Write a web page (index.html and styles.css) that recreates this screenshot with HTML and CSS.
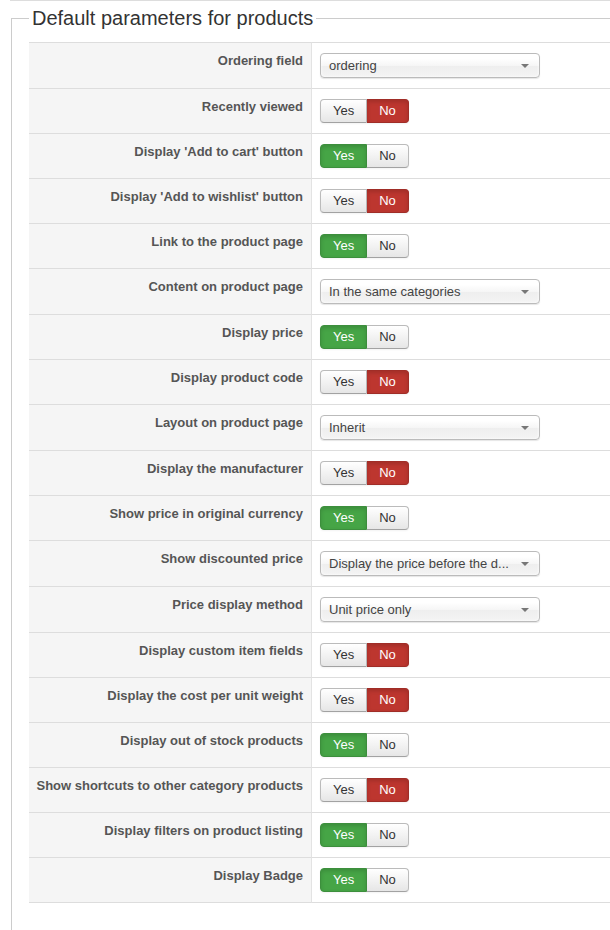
FILE: index.html
```html
<!DOCTYPE html>
<html lang="en">
<head>
    <meta charset="utf-8">
    <title>Default parameters for products</title>
    <link rel="stylesheet" href="styles.css">
</head>
<body>

    <div class="page">
        <fieldset class="params">
            <legend>Default parameters for products</legend>

            <table class="param-table">
                <tr>
                    <td class="key">Ordering field</td>
                    <td class="value"><div class="fake-select"><span>ordering</span><b class="caret"></b></div></td>
                </tr>
                <tr>
                    <td class="key">Recently viewed</td>
                    <td class="value"><div class="switch"><span class="opt">Yes</span><span class="opt no active">No</span></div></td>
                </tr>
                <tr>
                    <td class="key">Display 'Add to cart' button</td>
                    <td class="value"><div class="switch"><span class="opt yes active">Yes</span><span class="opt">No</span></div></td>
                </tr>
                <tr>
                    <td class="key">Display 'Add to wishlist' button</td>
                    <td class="value"><div class="switch"><span class="opt">Yes</span><span class="opt no active">No</span></div></td>
                </tr>
                <tr>
                    <td class="key">Link to the product page</td>
                    <td class="value"><div class="switch"><span class="opt yes active">Yes</span><span class="opt">No</span></div></td>
                </tr>
                <tr>
                    <td class="key">Content on product page</td>
                    <td class="value"><div class="fake-select"><span>In the same categories</span><b class="caret"></b></div></td>
                </tr>
                <tr>
                    <td class="key">Display price</td>
                    <td class="value"><div class="switch"><span class="opt yes active">Yes</span><span class="opt">No</span></div></td>
                </tr>
                <tr>
                    <td class="key">Display product code</td>
                    <td class="value"><div class="switch"><span class="opt">Yes</span><span class="opt no active">No</span></div></td>
                </tr>
                <tr>
                    <td class="key">Layout on product page</td>
                    <td class="value"><div class="fake-select"><span>Inherit</span><b class="caret"></b></div></td>
                </tr>
                <tr>
                    <td class="key">Display the manufacturer</td>
                    <td class="value"><div class="switch"><span class="opt">Yes</span><span class="opt no active">No</span></div></td>
                </tr>
                <tr>
                    <td class="key">Show price in original currency</td>
                    <td class="value"><div class="switch"><span class="opt yes active">Yes</span><span class="opt">No</span></div></td>
                </tr>
                <tr>
                    <td class="key">Show discounted price</td>
                    <td class="value"><div class="fake-select"><span>Display the price before the d...</span><b class="caret"></b></div></td>
                </tr>
                <tr>
                    <td class="key">Price display method</td>
                    <td class="value"><div class="fake-select"><span>Unit price only</span><b class="caret"></b></div></td>
                </tr>
                <tr>
                    <td class="key">Display custom item fields</td>
                    <td class="value"><div class="switch"><span class="opt">Yes</span><span class="opt no active">No</span></div></td>
                </tr>
                <tr>
                    <td class="key">Display the cost per unit weight</td>
                    <td class="value"><div class="switch"><span class="opt">Yes</span><span class="opt no active">No</span></div></td>
                </tr>
                <tr>
                    <td class="key">Display out of stock products</td>
                    <td class="value"><div class="switch"><span class="opt yes active">Yes</span><span class="opt">No</span></div></td>
                </tr>
                <tr>
                    <td class="key">Show shortcuts to other category products</td>
                    <td class="value"><div class="switch"><span class="opt">Yes</span><span class="opt no active">No</span></div></td>
                </tr>
                <tr>
                    <td class="key">Display filters on product listing</td>
                    <td class="value"><div class="switch"><span class="opt yes active">Yes</span><span class="opt">No</span></div></td>
                </tr>
                <tr>
                    <td class="key">Display Badge</td>
                    <td class="value"><div class="switch"><span class="opt yes active">Yes</span><span class="opt">No</span></div></td>
                </tr>
            </table>
        </fieldset>
    </div>

</body>
</html>
```

FILE: styles.css
```css
* {
    box-sizing: border-box;
}

html, body {
    margin: 0;
    padding: 0;
}

body {
    font-family: 'Liberation Sans', Arial, sans-serif;
    font-size: 13px;
    line-height: 18px;
    color: #333;
    background: #fff;
}

.page {
    margin-left: 10px;
    border-top: 1px solid #ddd;
}

/* right edge of the box is cut off by the window */
.params {
    margin: 0 0 0 1px;
    padding: 7px 0 30px 17px;
    border: 1px solid #ccc;
    border-right: 0;
    min-height: 940px;
}

.params legend {
    padding: 0 3px;
    font-size: 20px;
    line-height: 34px;
    color: #333;
}

.param-table {
    width: 100%;
    border-collapse: separate;
    border-spacing: 0;
}

.param-table td {
    border-top: 1px solid #ddd;
    vertical-align: top;
}

.param-table tr:last-child td {
    border-bottom: 1px solid #ddd;
}

.param-table .key {
    width: 283px;
    padding: 9px 8px 0 0;
    text-align: right;
    font-weight: bold;
    color: #555;
    background: #f5f5f5;
    border-right: 1px solid #e3e3e3;
}

.param-table .value {
    padding: 10px 8px;
}

/* dropdown */
.fake-select {
    position: relative;
    width: 220px;
    height: 25px;
    padding: 3px 24px 0 8px;
    border: 1px solid #bbb;
    border-radius: 4px;
    background: linear-gradient(#fff 20%, #f6f6f6 50%, #eee 52%, #f4f4f4);
    box-shadow: 0 0 3px #fff inset, 0 1px 1px rgba(0, 0, 0, 0.1);
    color: #444;
    white-space: nowrap;
    overflow: hidden;
}

.fake-select span {
    display: block;
    overflow: hidden;
    text-overflow: ellipsis;
}

.fake-select .caret {
    position: absolute;
    right: 10px;
    top: 10px;
    width: 0;
    height: 0;
    border-left: 4px solid transparent;
    border-right: 4px solid transparent;
    border-top: 4px solid #777;
}

/* yes / no switch */
.switch {
    display: flex;
}

.opt {
    display: block;
    padding: 2px 12px;
    line-height: 18px;
    color: #333;
    border: 1px solid #bbb;
    border-bottom-color: #a2a2a2;
    background: linear-gradient(#fff, #e6e6e6);
    box-shadow: inset 0 1px 0 rgba(255, 255, 255, 0.2), 0 1px 2px rgba(0, 0, 0, 0.05);
}

.opt:first-child {
    border-radius: 4px 0 0 4px;
}

.opt:last-child {
    border-left: 0;
    border-radius: 0 4px 4px 0;
}

.opt.active {
    color: #fff;
    box-shadow: inset 0 2px 4px rgba(0, 0, 0, 0.15), 0 1px 2px rgba(0, 0, 0, 0.05);
}

.opt.yes {
    background: #46a546;
    border-color: #3d8f3d;
}

.opt.no {
    background: #bd362f;
    border-color: #a02d27;
}
```
